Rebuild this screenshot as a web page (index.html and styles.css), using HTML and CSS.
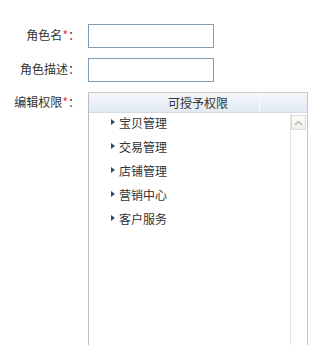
FILE: index.html
```html
<!DOCTYPE html>
<html lang="zh-CN">
<head>
<meta charset="utf-8">
<link rel="stylesheet" href="styles.css">
</head>
<body>
<div class="form">
  <div class="row">
    <label class="label">角色名<span class="req">*</span>：</label>
    <input class="input" type="text">
  </div>
  <div class="row">
    <label class="label">角色描述：</label>
    <input class="input" type="text">
  </div>
  <div class="row row-top">
    <label class="label label-top">编辑权限<span class="req">*</span>：</label>
    <div class="perm">
      <div class="perm-head">
        <div class="perm-title">可授予权限</div>
        <div class="perm-divider"></div>
      </div>
      <div class="perm-body">
        <ul class="perm-list">
          <li class="perm-item"><span class="arrow"></span>宝贝管理</li>
          <li class="perm-item"><span class="arrow"></span>交易管理</li>
          <li class="perm-item"><span class="arrow"></span>店铺管理</li>
          <li class="perm-item"><span class="arrow"></span>营销中心</li>
          <li class="perm-item"><span class="arrow"></span>客户服务</li>
        </ul>
        <div class="scrollbar">
          <div class="scroll-up">
            <svg width="9" height="6" viewBox="0 0 9 6"><path d="M1 5 L4.5 1.5 L8 5" fill="none" stroke="#b4b4b4" stroke-width="1.4"/></svg>
          </div>
        </div>
      </div>
    </div>
  </div>
</div>
</body>
</html>
```
FILE: styles.css
```css
html, body {
  margin: 0;
  padding: 0;
  background: #fff;
}
body {
  font-family: "Noto Sans CJK SC", "Liberation Sans", sans-serif;
  font-size: 12px;
  color: #333;
  width: 328px;
  height: 345px;
  overflow: hidden;
}
.form {
  padding-top: 24px;
}
.row {
  display: flex;
  align-items: center;
  margin-bottom: 10px;
}
.row-top {
  align-items: flex-start;
  margin-bottom: 0;
}
.label {
  width: 80px;
  text-align: right;
  line-height: 20px;
  margin-right: 8px;
  margin-top: -3px;
}
.label-top {
  margin-top: 0;
  padding-top: 0;
}
.req {
  color: #e0383c;
}
.input {
  box-sizing: border-box;
  width: 126px;
  height: 24px;
  margin: 0;
  padding: 0 3px;
  border: 1px solid #7f9db9;
  background: #fff;
  outline: none;
}
.perm {
  box-sizing: border-box;
  width: 220px;
  height: 270px;
  border: 1px solid #cfcfcf;
  border-left-color: #bdbdbd;
  border-right-color: #c4c4c4;
  display: flex;
  flex-direction: column;
}
.perm-head {
  position: relative;
  height: 19px;
  border-bottom: 1px solid #d4dbe4;
  background: linear-gradient(#f3f6fa, #e3eaf3);
}
.perm-title {
  text-align: center;
  line-height: 19px;
  color: #333;
}
.perm-divider {
  position: absolute;
  left: 170px;
  top: 0;
  width: 1px;
  height: 19px;
  background: #fbfcfe;
}
.perm-body {
  flex: 1;
  display: flex;
  margin-top: -1px;
}
.perm-list {
  flex: 1;
  list-style: none;
  margin: -2px 0 0 0;
  padding: 0 0 0 22px;
}
.perm-item {
  display: flex;
  align-items: center;
  height: 24px;
}
.arrow {
  width: 0;
  height: 0;
  border-top: 3.5px solid transparent;
  border-bottom: 3.5px solid transparent;
  border-left: 4px solid #3a4a66;
  margin-right: 4px;
}
.scrollbar {
  width: 16px;
  border-left: 1px solid #e2e2e2;
  padding-top: 3px;
}
.scroll-up {
  box-sizing: border-box;
  width: 15px;
  height: 15px;
  border: 1px solid #dcdcd6;
  background: linear-gradient(#fbfbf9, #efefeb);
  display: flex;
  align-items: center;
  justify-content: center;
}
```
